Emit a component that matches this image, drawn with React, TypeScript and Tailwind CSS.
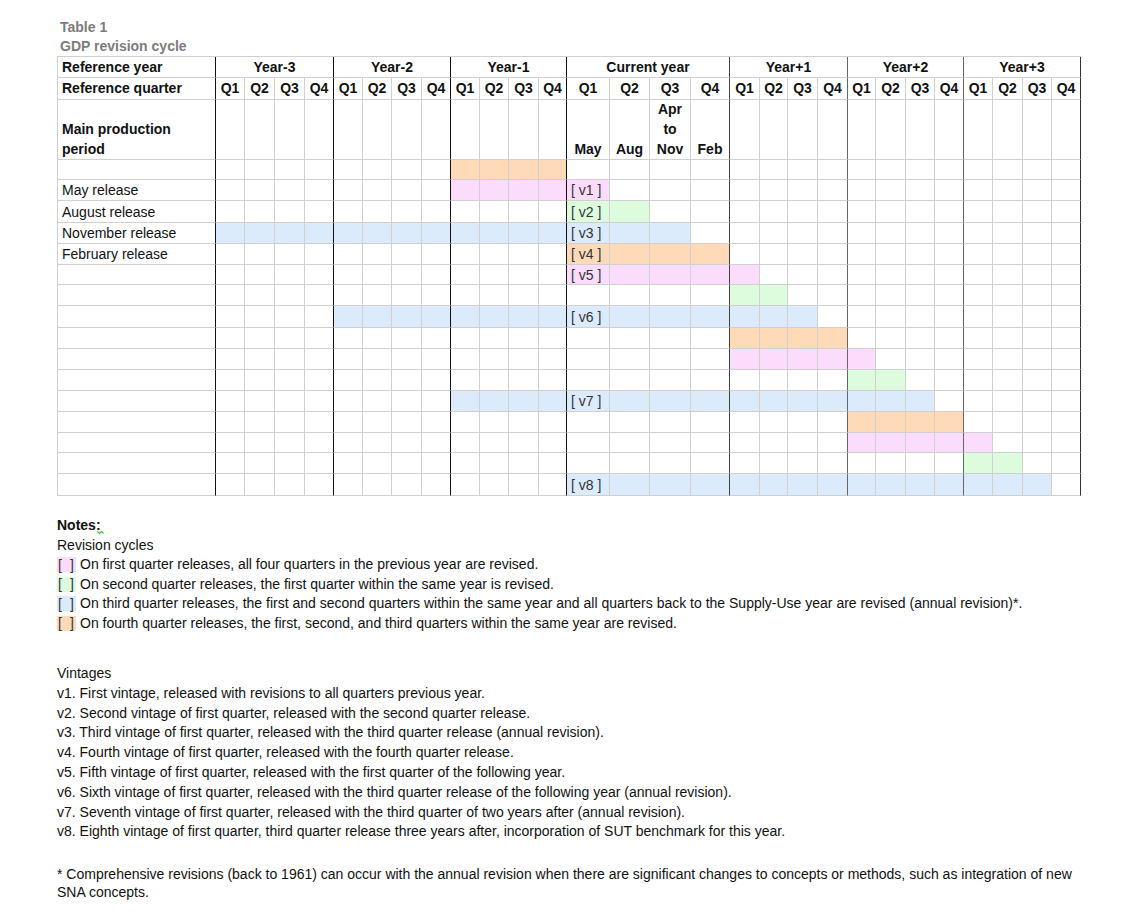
const FILL: Record<string, string> = {
  P: 'bg-[#fcdcfc]',
  G: 'bg-[#ddfcdd]',
  B: 'bg-[#dcebfb]',
  O: 'bg-[#fedab8]',
};

const YEARS = ['Year-3', 'Year-2', 'Year-1', 'Current year', 'Year+1', 'Year+2', 'Year+3'];

// right border colour of the year dividers
const YEAR_EDGE = [
  'border-r-[#111]',
  'border-r-[#111]',
  'border-r-[#111]',
  'border-r-[#444]',
  'border-r-[#666]',
  'border-r-[#666]',
  'border-r-[#333]',
];

const edge = (q: number) => (q % 4 === 3 ? YEAR_EDGE[Math.floor(q / 4)] : 'border-r-[#d0d0d0]');

type Run = [string, number, number];
interface Row {
  label?: string;
  tag?: string;
  runs: Run[];
}

const rows: Row[] = [
  { runs: [['O', 8, 11]] },
  { label: 'May release', tag: 'v1', runs: [['P', 8, 12]] },
  { label: 'August release', tag: 'v2', runs: [['G', 12, 13]] },
  { label: 'November release', tag: 'v3', runs: [['B', 0, 14]] },
  { label: 'February release', tag: 'v4', runs: [['O', 12, 15]] },
  { tag: 'v5', runs: [['P', 12, 16]] },
  { runs: [['G', 16, 17]] },
  { tag: 'v6', runs: [['B', 4, 18]] },
  { runs: [['O', 16, 19]] },
  { runs: [['P', 16, 20]] },
  { runs: [['G', 20, 21]] },
  { tag: 'v7', runs: [['B', 8, 22]] },
  { runs: [['O', 20, 23]] },
  { runs: [['P', 20, 24]] },
  { runs: [['G', 24, 25]] },
  { tag: 'v8', runs: [['B', 12, 26]] },
];

const fillAt = (row: Row, q: number) => {
  const run = row.runs.find(([, a, b]) => q >= a && q <= b);
  return run ? FILL[run[0]] : '';
};

const production: Record<number, string[]> = {
  12: ['May'],
  13: ['Aug'],
  14: ['Apr', 'to', 'Nov'],
  15: ['Feb'],
};

const quarters = Array.from({ length: 28 }, (_, i) => i);

const legend = [
  { fill: FILL.P, text: 'On first quarter releases, all four quarters in the previous year are revised.' },
  { fill: FILL.G, text: 'On second quarter releases, the first quarter within the same year is revised.' },
  {
    fill: FILL.B,
    text: 'On third quarter releases, the first and second quarters within the same year and all quarters back to the Supply-Use year are revised (annual revision)*.',
  },
  { fill: FILL.O, text: 'On fourth quarter releases, the first, second, and third quarters within the same year are revised.' },
];

const vintages = [
  'v1. First vintage, released with revisions to all quarters previous year.',
  'v2. Second vintage of first quarter, released with the second quarter release.',
  'v3. Third vintage of first quarter, released with the third quarter release (annual revision).',
  'v4. Fourth vintage of first quarter, released with the fourth quarter release.',
  'v5. Fifth vintage of first quarter, released with the first quarter of the following year.',
  'v6. Sixth vintage of first quarter, released with the third quarter release of the following year (annual revision).',
  'v7. Seventh vintage of first quarter, released with the third quarter of two years after (annual revision).',
  'v8. Eighth vintage of first quarter, third quarter release three years after, incorporation of SUT benchmark for this year.',
];

export default function App() {
  return (
    <div className="min-h-screen w-[1140px] bg-white font-['Liberation_Sans',Arial,sans-serif] text-[14px] text-[#111]">
      {/* Title */}
      <div className="pl-[60px] pt-[18px] text-[14px] font-bold leading-[19px] text-[#7c7c7c]">
        <div>Table 1</div>
        <div>GDP revision cycle</div>
      </div>

      {/* Revision grid */}
      <div className="ml-[57px] inline-grid grid-cols-[158px_29px_30px_30px_29px_29px_29px_30px_29px_29px_29px_30px_28px_43px_40px_41px_39px_30px_28px_30px_30px_28px_30px_29px_29px_29px_30px_29px_29px] grid-rows-[21px_22px_60px_20px_21px_22px_21px_21px_20px_21px_22px_21px_21px_21px_21px_21px_20px_21px_22px] border-l border-t border-[#d0d0d0]">
        {/* Reference year */}
        <div className="flex items-center border-b border-r border-b-[#d0d0d0] border-r-[#111] pl-[4px] font-bold">
          Reference year
        </div>
        {YEARS.map((y, i) => (
          <div
            key={y}
            className={`col-span-4 flex items-center justify-center border-b border-r border-b-[#d0d0d0] font-bold ${YEAR_EDGE[i]}`}
          >
            {y}
          </div>
        ))}

        {/* Reference quarter */}
        <div className="flex items-center border-b border-r border-b-[#d0d0d0] border-r-[#111] pl-[4px] font-bold">
          Reference quarter
        </div>
        {quarters.map((q) => (
          <div
            key={q}
            className={`flex items-center justify-center border-b border-r border-b-[#d0d0d0] font-bold ${edge(q)}`}
          >
            Q{(q % 4) + 1}
          </div>
        ))}

        {/* Main production period */}
        <div className="flex flex-col justify-end border-b border-r border-b-[#d0d0d0] border-r-[#111] pl-[4px] font-bold leading-[20px]">
          <span>Main production</span>
          <span>period</span>
        </div>
        {quarters.map((q) => (
          <div
            key={q}
            className={`flex flex-col items-center justify-end border-b border-r border-b-[#d0d0d0] font-bold leading-[20px] ${edge(q)}`}
          >
            {(production[q] ?? []).map((t) => (
              <span key={t}>{t}</span>
            ))}
          </div>
        ))}

        {/* Releases */}
        {rows.map((row, r) => (
          <div key={r} className="contents">
            <div className="flex items-center border-b border-r border-b-[#d0d0d0] border-r-[#111] pl-[4px] leading-none">
              {row.label}
            </div>
            {quarters.map((q) => (
              <div
                key={q}
                className={`flex items-center border-b border-r border-b-[#d0d0d0] pl-[4px] leading-none text-[#333] ${edge(q)} ${fillAt(row, q)}`}
              >
                {q === 12 && row.tag ? `[ ${row.tag} ]` : null}
              </div>
            ))}
          </div>
        ))}
      </div>

      {/* Notes */}
      <div className="pl-[57px] pt-[20px] leading-[19.5px]">
        <div className="font-bold">
          <span className="relative">
            Notes:
            <svg className="absolute left-[40px] top-[13px]" width="8" height="5" viewBox="0 0 8 5">
              <path d="M0.5 1.5 L2.5 3.5 L4.5 1.5 L6.5 3.5" fill="none" stroke="#3cc13c" strokeWidth="1.2" />
            </svg>
          </span>
        </div>
        <div>Revision cycles</div>
        {legend.map((l) => (
          <div key={l.text} className="flex items-center whitespace-nowrap">
            <span className={`flex h-[15px] w-[19px] items-center justify-between pl-[1px] pr-[2px] leading-none text-[#333] ${l.fill}`}>
              <span>[</span>
              <span>]</span>
            </span>
            <span className="ml-[4px]">{l.text}</span>
          </div>
        ))}
      </div>

      <div className="pl-[57px] pt-[31px] leading-[19.8px]">
        <div>Vintages</div>
        {vintages.map((v) => (
          <div key={v} className="whitespace-nowrap">
            {v}
          </div>
        ))}
      </div>

      <div className="pl-[57px] pt-[24px] leading-[17.5px] whitespace-nowrap">
        * Comprehensive revisions (back to 1961) can occur with the annual revision when there are significant changes to concepts or methods, such as integration of new
        <br />
        SNA concepts.
      </div>
    </div>
  );
}
